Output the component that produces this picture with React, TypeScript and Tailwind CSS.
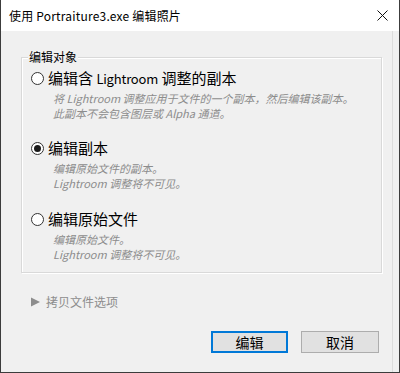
import React from "react";

const font = { fontFamily: '"Noto Sans CJK SC", "Noto Sans", sans-serif' };

function Radio({ checked }: { checked?: boolean }) {
  return (
    <span className="w-[13px] h-[13px] rounded-full border border-[#333333] bg-white flex items-center justify-center shrink-0">
      {checked && <span className="w-[7px] h-[7px] rounded-full bg-[#1a1a1a]" />}
    </span>
  );
}

function Option({
  label,
  lines,
  checked,
}: {
  label: React.ReactNode;
  lines: React.ReactNode[];
  checked?: boolean;
}) {
  return (
    <div className="flex flex-col">
      <div className="flex items-center h-[20px] pl-[9px] gap-[4px]">
        <Radio checked={checked} />
        <span className="text-[15px] leading-[20px] text-black whitespace-nowrap">{label}</span>
      </div>
      <div className="flex flex-col pl-[31px] mt-[3px]">
        {lines.map((l, i) => (
          <span
            key={i}
            className="text-[11px] leading-[15px] italic text-[#8c8c8c] whitespace-nowrap"
          >
            {l}
          </span>
        ))}
      </div>
    </div>
  );
}

export default function App() {
  return (
    <div
      style={font}
      className="w-[400px] h-[373px] bg-[#f0f0f0] border-l border-r border-b border-[#3c3c3c] flex flex-col overflow-hidden"
    >
      <div className="h-[31px] bg-white flex items-center justify-between pl-[8px] pr-[10px] shrink-0">
        <span className="text-[12px] text-black tracking-[0.2px]">使用 Portraiture3.exe 编辑照片</span>
        <svg width="11" height="11" viewBox="0 0 11 11" className="mr-[1px]">
          <path d="M0.5 0.5 L10.5 10.5 M10.5 0.5 L0.5 10.5" stroke="#111" strokeWidth="1" />
        </svg>
      </div>
      <div className="flex-1 flex flex-col pl-[20px] pr-[17px] pt-[26px] border-r border-[#dcdcdc] mr-[6px]">
        <div className="relative w-[361px] h-[216px] border border-[#d9d9d9] shadow-[inset_1px_1px_0_#ffffff,1px_1px_0_#ffffff] flex flex-col pt-[10px]">
          <span className="absolute -top-[9px] left-[6px] bg-[#f0f0f0] px-[1px] text-[12px] leading-[16px] text-black">
            编辑对象
          </span>
          <Option
            label={
              <>
                编辑含 <span className="text-[13px] tracking-[-0.2px]">Lightroom</span> 调整的副本
              </>
            }
            lines={[
              "将 Lightroom 调整应用于文件的一个副本，然后编辑该副本。",
              "此副本不会包含图层或 Alpha 通道。",
            ]}
          />
          <div className="mt-[17px]">
            <Option checked label="编辑副本" lines={["编辑原始文件的副本。", "Lightroom 调整将不可见。"]} />
          </div>
          <div className="mt-[18px]">
            <Option label="编辑原始文件" lines={["编辑原始文件。", "Lightroom 调整将不可见。"]} />
          </div>
        </div>
        <div className="flex items-center mt-[20px] ml-[10px] gap-[6px] text-[#8d8d8d]">
          <svg width="9" height="10" viewBox="0 0 9 10">
            <path d="M0 0.5 L9 5 L0 9.5 Z" fill="#8d8d8d" />
          </svg>
          <span className="text-[12px] leading-[18px]">拷贝文件选项</span>
        </div>
        <div className="flex justify-end gap-[13px] mt-[20px] mr-[-4px]">
          <button className="w-[77px] h-[22px] border-2 border-[#0078d7] bg-[#e1e1e1] text-[14px] leading-[18px] text-black">
            编辑
          </button>
          <button className="w-[78px] h-[22px] border border-[#adadad] bg-[#e1e1e1] text-[14px] leading-[20px] text-black">
            取消
          </button>
        </div>
      </div>
    </div>
  );
}
